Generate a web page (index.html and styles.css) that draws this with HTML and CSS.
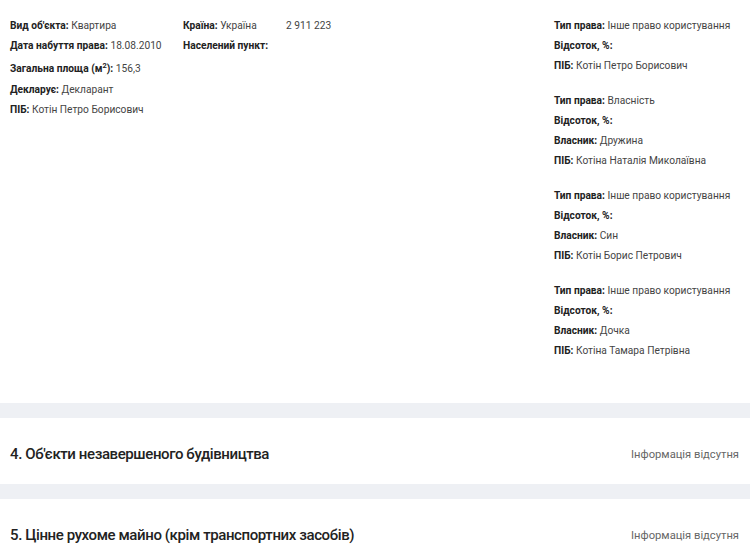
FILE: index.html
```html
<!DOCTYPE html>
<html lang="uk">
<head>
<meta charset="utf-8">
<link rel="stylesheet" href="styles.css">
</head>
<body>
<div class="page">
  <section class="card details">
    <div class="col col-main">
      <div class="line"><b>Вид об'єкта:</b> Квартира</div>
      <div class="line"><b>Дата набуття права:</b> 18.08.2010</div>
      <div class="line line-sup"><b>Загальна площа (м<sup>2</sup>):</b> 156,3</div>
      <div class="line"><b>Декларує:</b> Декларант</div>
      <div class="line"><b>ПІБ:</b> Котін Петро Борисович</div>
    </div>
    <div class="col col-country">
      <div class="line"><b>Країна:</b> Україна</div>
      <div class="line"><b>Населений пункт:</b></div>
    </div>
    <div class="col col-cost">
      <div class="line">2 911 223</div>
    </div>
    <div class="col col-rights">
      <div class="group">
        <div class="line"><b>Тип права:</b> Інше право користування</div>
        <div class="line"><b>Відсоток, %:</b></div>
        <div class="line"><b>ПІБ:</b> Котін Петро Борисович</div>
      </div>
      <div class="group">
        <div class="line"><b>Тип права:</b> Власність</div>
        <div class="line"><b>Відсоток, %:</b></div>
        <div class="line"><b>Власник:</b> Дружина</div>
        <div class="line"><b>ПІБ:</b> Котіна Наталія Миколаївна</div>
      </div>
      <div class="group">
        <div class="line"><b>Тип права:</b> Інше право користування</div>
        <div class="line"><b>Відсоток, %:</b></div>
        <div class="line"><b>Власник:</b> Син</div>
        <div class="line"><b>ПІБ:</b> Котін Борис Петрович</div>
      </div>
      <div class="group">
        <div class="line"><b>Тип права:</b> Інше право користування</div>
        <div class="line"><b>Відсоток, %:</b></div>
        <div class="line"><b>Власник:</b> Дочка</div>
        <div class="line"><b>ПІБ:</b> Котіна Тамара Петрівна</div>
      </div>
    </div>
  </section>
  <section class="card section-row">
    <h2 class="section-title">4. Об'єкти незавершеного будівництва</h2>
    <span class="empty">Інформація відсутня</span>
  </section>
  <section class="card section-row">
    <h2 class="section-title">5. Цінне рухоме майно (крім транспортних засобів)</h2>
    <span class="empty">Інформація відсутня</span>
  </section>
</div>
</body>
</html>
```
FILE: styles.css
```css
html, body {
  margin: 0;
  padding: 0;
  background: #eef0f4;
}
body {
  font-family: Roboto, "Noto Sans", sans-serif;
  color: #333;
}
.page {
  display: flex;
  flex-direction: column;
  gap: 15px;
}
.card {
  background: #fff;
}
.details {
  display: flex;
  padding: 16px 10px 42px 10px;
  font-size: 10.2px;
}
.line {
  line-height: 20px;
  color: #444;
  white-space: nowrap;
}
.line b {
  color: #222;
  font-weight: 700;
}
.line sup {
  font-size: 7.5px;
  line-height: 0;
  vertical-align: 4px;
}
.line-sup {
  margin-top: 3px;
  margin-bottom: 1px;
}
.col-main { width: 173px; }
.col-country { width: 103px; }
.col-cost { flex: 1; }
.col-rights {
  width: 186px;
  display: flex;
  flex-direction: column;
  gap: 15px;
}
.section-row {
  display: flex;
  align-items: center;
  justify-content: space-between;
  height: 66px;
  padding: 6px 11px 0 10px;
  box-sizing: border-box;
}
.section-title {
  margin: 0;
  font-size: 15px;
  font-weight: 500;
  color: #222;
  letter-spacing: -0.4px;
}
.empty {
  font-size: 11.2px;
  color: #666;
}
```
